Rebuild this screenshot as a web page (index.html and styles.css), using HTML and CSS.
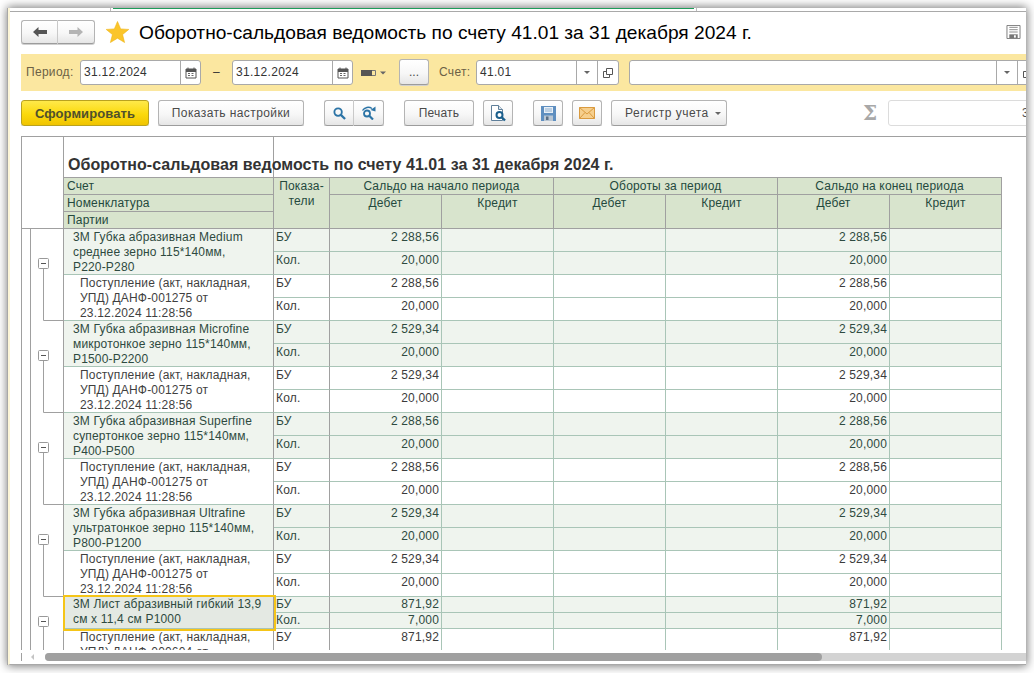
FILE: index.html
```html
<!DOCTYPE html>
<html lang="ru">
<head>
<meta charset="utf-8">
<title>Оборотно-сальдовая ведомость</title>
<link rel="stylesheet" href="styles.css">
</head>
<body>
<div class="window">
  <div class="tabstrip"><div class="tabline"></div></div>
  <div class="content">
    <div class="navrow">
      <div class="btn-group nav-group">
        <button class="btn nav-btn"><svg width="14" height="10" viewBox="0 0 14 10"><path d="M0 5 5.500 0V3H14V7H5.500V10Z" fill="#555"/></svg></button>
        <button class="btn nav-btn"><svg width="14" height="10" viewBox="0 0 14 10"><path d="M14 5 8.500 0V3H0V7H8.500V10Z" fill="#b4b4b4"/></svg></button>
      </div>
      <svg class="star" width="23" height="22" viewBox="0 0 24 24" preserveAspectRatio="none"><path d="M12 0.500 15.300 8.600 23.800 9.200 17.300 14.800 19.400 23.500 12 18.800 4.600 23.500 6.700 14.800 0.200 9.200 8.700 8.600Z" fill="#fbc52a" stroke="#eeb211" stroke-width=".6"/></svg>
      <h1 class="page-title">Оборотно-сальдовая ведомость по счету 41.01 за 31 декабря 2024 г.</h1>
      <svg class="floppy-top" width="15" height="14" viewBox="0 0 15 15"><path d="M.5.5H14.500V14.500H.5Z" fill="#fff" stroke="#777"/><path d="M3 2.500H12M3 5H12M3 7.500H12" stroke="#888"/><path d="M3 10H12V14H3Z" fill="#777"/><path d="M8 11H10V13.500H8Z" fill="#fff"/></svg>
    </div>

    <div class="filterbar">
      <span class="flabel period-label">Период:</span>
      <div class="field date-field"><span class="field-value">31.12.2024</span><span class="field-btn cal-btn"><svg width="12" height="12" viewBox="0 0 12 12"><path d="M1 2H11V11H1Z" fill="#fff" stroke="#555"/><path d="M1 2H11V5H1Z" fill="#555"/><path d="M3 0.500V3M9 0.500V3" stroke="#555"/><path d="M3 6.500H5M6.500 6.500H8.500M3 8.500H5M6.500 8.500H8.500" stroke="#666"/></svg></span></div>
      <span class="dash">–</span>
      <div class="field date-field date-two"><span class="field-value">31.12.2024</span><span class="field-btn cal-btn"><svg width="12" height="12" viewBox="0 0 12 12"><path d="M1 2H11V11H1Z" fill="#fff" stroke="#555"/><path d="M1 2H11V5H1Z" fill="#555"/><path d="M3 0.500V3M9 0.500V3" stroke="#555"/><path d="M3 6.500H5M6.500 6.500H8.500M3 8.500H5M6.500 8.500H8.500" stroke="#666"/></svg></span></div>
      <svg class="period-icon" width="25" height="6" viewBox="0 0 25 6"><path d="M0 0H11V6H0Z" fill="#555"/><path d="M11 .500H14.500V5.500H11" fill="none" stroke="#777"/><path d="M19 1.500H25L22 4.500Z" fill="#666"/></svg>
      <button class="btn dots-btn">...</button>
      <span class="flabel acc-label">Счет:</span>
      <div class="field acc-field"><span class="field-value">41.01</span><span class="field-btn drop-btn"><span class="tri"></span></span><span class="field-btn open-btn"><svg width="10" height="10" viewBox="0 0 10 10"><path d="M3.500.500H9.500V6.500H3.500Z" fill="none" stroke="#555"/><path d="M3 3.500H.500V9.500H6.500V7" fill="none" stroke="#555"/></svg></span></div>
      <div class="field sub-field"><span class="field-value"></span><span class="field-btn drop-btn"><span class="tri"></span></span><span class="field-btn open-btn"><svg width="10" height="10" viewBox="0 0 10 10"><path d="M3.500.500H9.500V6.500H3.500Z" fill="none" stroke="#555"/><path d="M3 3.500H.500V9.500H6.500V7" fill="none" stroke="#555"/></svg></span></div>
    </div>

    <div class="cmdbar">
      <button class="btn primary-btn">Сформировать</button>
      <button class="btn settings-btn">Показать настройки</button>
      <div class="btn-group search-group">
        <button class="btn icon-btn"><svg width="13" height="13" viewBox="0 0 14 14"><circle cx="5.500" cy="5.500" r="4" fill="none" stroke="#2c74a6" stroke-width="2"/><path d="M8.500 8.500 13 13" stroke="#2c74a6" stroke-width="2.400"/></svg></button>
        <button class="btn icon-btn"><svg width="16" height="14" viewBox="0 0 16 14"><circle cx="6" cy="7.500" r="3" fill="none" stroke="#2c74a6" stroke-width="1.800"/><path d="M8.500 10 12 13.500" stroke="#2c74a6" stroke-width="2.200"/><path d="M1.500 4.500C3.500 1 8 .5 11 2.500" fill="none" stroke="#2c74a6" stroke-width="1.400"/><path d="M14.500 .5V5.500L9.500 4Z" fill="#2c74a6"/></svg></button>
      </div>
      <button class="btn print-btn">Печать</button>
      <button class="btn square-btn preview-btn"><svg width="16" height="17" viewBox="0 0 16 17"><path d="M1.500.500H8.500L12.500 4.500V15.500H1.500Z" fill="#fff" stroke="#5f7f9a"/><path d="M8.500.5V4.500H12.500" fill="#dfe7ee" stroke="#5f7f9a"/><circle cx="9.500" cy="10" r="3" fill="#fff" stroke="#1b5f8c" stroke-width="2"/><path d="M11.500 12 15 15.500" stroke="#1b5f8c" stroke-width="2.400"/></svg></button>
      <button class="btn square-btn save-btn"><svg width="15" height="15" viewBox="0 0 15 15"><path d="M0 0H15V15H0Z" fill="#5f8fc0"/><path d="M3 1H12V7H3Z" fill="#e9f0f7"/><path d="M4 3H11M4 5H11" stroke="#8fb0cf"/><path d="M3 9.500H12V15H3Z" fill="#b9c6d3"/><path d="M5 10.500H7.500V14H5Z" fill="#5a6f85"/></svg></button>
      <button class="btn square-btn mail-btn"><svg width="16" height="12" viewBox="0 0 16 12"><path d="M.500.500H15.500V11.500H.500Z" fill="#f6cf8d" stroke="#d99a3f"/><path d="M.500.500 8 7 15.500.500M.500 11.500 6 5.500M15.500 11.500 10 5.500" fill="none" stroke="#d99a3f"/></svg></button>
      <button class="btn register-btn">Регистр учета<span class="tri tri-btn"></span></button>
      <span class="sigma">Σ</span>
      <div class="total-field">3</div>
    </div>

    <div class="report">
      <table class="sheet">
        <colgroup><col class="c-tree"><col class="c-name"><col class="c-ind"><col class="c-num"><col class="c-num"><col class="c-num"><col class="c-num"><col class="c-num"><col class="c-num"></colgroup>
        <thead>
          <tr class="r-title"><th class="corner" rowspan="4"></th><th class="title-cell"><span class="report-title">Оборотно-сальдовая ведомость по счету 41.01 за 31 декабря 2024 г.</span></th><th class="title-rest" colspan="7"></th></tr>
          <tr class="r-head"><th class="hl">Счет</th><th class="hi" rowspan="3">Показа-<br>тели</th><th colspan="2">Сальдо на начало периода</th><th colspan="2">Обороты за период</th><th colspan="2">Сальдо на конец периода</th></tr>
          <tr class="r-head"><th class="hl">Номенклатура</th><th rowspan="2">Дебет</th><th rowspan="2">Кредит</th><th rowspan="2">Дебет</th><th rowspan="2">Кредит</th><th rowspan="2">Дебет</th><th rowspan="2">Кредит</th></tr>
          <tr class="r-head"><th class="hl">Партии</th></tr>
        </thead>
        <tbody>
          <tr class="tint"><td class="tree" rowspan="4"><svg class="tree-svg" width="41" height="92" viewBox="0 0 41 92"><path d="M8.500 0V92M21.500 40V91.500H41" fill="none" stroke="#a0a0a0"/><rect x="16.500" y="29.500" width="10" height="10" rx="1" fill="#fff" stroke="#999"/><path d="M19 34.500H24" stroke="#555"/></svg></td><td class="name" rowspan="2"><div class="cell-text">3M Губка абразивная Medium среднее зерно 115*140мм, <span class="nb">P220-P280</span></div></td><td class="ind">БУ</td><td class="num">2 288,56</td><td></td><td></td><td></td><td class="num">2 288,56</td><td></td></tr>
          <tr class="tint"><td class="ind">Кол.</td><td class="num">20,000</td><td></td><td></td><td></td><td class="num">20,000</td><td></td></tr>
          <tr><td class="name sub" rowspan="2"><div class="cell-text">Поступление (акт, накладная, УПД) ДАНФ-001275 от 23.12.2024 11:28:56</div></td><td class="ind">БУ</td><td class="num">2 288,56</td><td></td><td></td><td></td><td class="num">2 288,56</td><td></td></tr>
          <tr><td class="ind">Кол.</td><td class="num">20,000</td><td></td><td></td><td></td><td class="num">20,000</td><td></td></tr>

          <tr class="tint"><td class="tree" rowspan="4"><svg class="tree-svg" width="41" height="92" viewBox="0 0 41 92"><path d="M8.500 0V92M21.500 40V91.500H41" fill="none" stroke="#a0a0a0"/><rect x="16.500" y="29.500" width="10" height="10" rx="1" fill="#fff" stroke="#999"/><path d="M19 34.500H24" stroke="#555"/></svg></td><td class="name" rowspan="2"><div class="cell-text">3M Губка абразивная Microfine микротонкое зерно 115*140мм, P1500-P2200</div></td><td class="ind">БУ</td><td class="num">2 529,34</td><td></td><td></td><td></td><td class="num">2 529,34</td><td></td></tr>
          <tr class="tint"><td class="ind">Кол.</td><td class="num">20,000</td><td></td><td></td><td></td><td class="num">20,000</td><td></td></tr>
          <tr><td class="name sub" rowspan="2"><div class="cell-text">Поступление (акт, накладная, УПД) ДАНФ-001275 от 23.12.2024 11:28:56</div></td><td class="ind">БУ</td><td class="num">2 529,34</td><td></td><td></td><td></td><td class="num">2 529,34</td><td></td></tr>
          <tr><td class="ind">Кол.</td><td class="num">20,000</td><td></td><td></td><td></td><td class="num">20,000</td><td></td></tr>

          <tr class="tint"><td class="tree" rowspan="4"><svg class="tree-svg" width="41" height="92" viewBox="0 0 41 92"><path d="M8.500 0V92M21.500 40V91.500H41" fill="none" stroke="#a0a0a0"/><rect x="16.500" y="29.500" width="10" height="10" rx="1" fill="#fff" stroke="#999"/><path d="M19 34.500H24" stroke="#555"/></svg></td><td class="name" rowspan="2"><div class="cell-text">3M Губка абразивная Superfine супертонкое зерно 115*140мм, P400-P500</div></td><td class="ind">БУ</td><td class="num">2 288,56</td><td></td><td></td><td></td><td class="num">2 288,56</td><td></td></tr>
          <tr class="tint"><td class="ind">Кол.</td><td class="num">20,000</td><td></td><td></td><td></td><td class="num">20,000</td><td></td></tr>
          <tr><td class="name sub" rowspan="2"><div class="cell-text">Поступление (акт, накладная, УПД) ДАНФ-001275 от 23.12.2024 11:28:56</div></td><td class="ind">БУ</td><td class="num">2 288,56</td><td></td><td></td><td></td><td class="num">2 288,56</td><td></td></tr>
          <tr><td class="ind">Кол.</td><td class="num">20,000</td><td></td><td></td><td></td><td class="num">20,000</td><td></td></tr>

          <tr class="tint"><td class="tree" rowspan="4"><svg class="tree-svg" width="41" height="92" viewBox="0 0 41 92"><path d="M8.500 0V92M21.500 40V91.500H41" fill="none" stroke="#a0a0a0"/><rect x="16.500" y="29.500" width="10" height="10" rx="1" fill="#fff" stroke="#999"/><path d="M19 34.500H24" stroke="#555"/></svg></td><td class="name" rowspan="2"><div class="cell-text">3M Губка абразивная Ultrafine ультратонкое зерно 115*140мм, P800-P1200</div></td><td class="ind">БУ</td><td class="num">2 529,34</td><td></td><td></td><td></td><td class="num">2 529,34</td><td></td></tr>
          <tr class="tint"><td class="ind">Кол.</td><td class="num">20,000</td><td></td><td></td><td></td><td class="num">20,000</td><td></td></tr>
          <tr><td class="name sub" rowspan="2"><div class="cell-text">Поступление (акт, накладная, УПД) ДАНФ-001275 от 23.12.2024 11:28:56</div></td><td class="ind">БУ</td><td class="num">2 529,34</td><td></td><td></td><td></td><td class="num">2 529,34</td><td></td></tr>
          <tr><td class="ind">Кол.</td><td class="num">20,000</td><td></td><td></td><td></td><td class="num">20,000</td><td></td></tr>

          <tr class="tint short"><td class="tree" rowspan="4"><svg class="tree-svg" width="41" height="78" viewBox="0 0 41 78"><path d="M8.500 0V78M21.500 30V78" fill="none" stroke="#a0a0a0"/><rect x="16.500" y="19.500" width="10" height="10" rx="1" fill="#fff" stroke="#999"/><path d="M19 24.500H24" stroke="#555"/></svg></td><td class="name selected" rowspan="2">3M Лист абразивный гибкий 13,9 см х 11,4 см P1000</td><td class="ind">БУ</td><td class="num">871,92</td><td></td><td></td><td></td><td class="num">871,92</td><td></td></tr>
          <tr class="tint short"><td class="ind">Кол.</td><td class="num">7,000</td><td></td><td></td><td></td><td class="num">7,000</td><td></td></tr>
          <tr><td class="name sub" rowspan="2"><div class="cell-text">Поступление (акт, накладная, УПД) ДАНФ-000604 от 23.12.2024 11:28:56</div></td><td class="ind">БУ</td><td class="num">871,92</td><td></td><td></td><td></td><td class="num">871,92</td><td></td></tr>
          <tr><td class="ind">Кол.</td><td class="num">7,000</td><td></td><td></td><td></td><td class="num">7,000</td><td></td></tr>
        </tbody>
      </table>
    </div>
    <div class="scrollbar"><span class="scroll-arrow"></span><div class="scroll-track"><div class="scroll-thumb"></div></div></div>
  </div>
</div>
</body>
</html>
```

FILE: styles.css
```css
* { box-sizing: border-box; }
html, body { margin: 0; padding: 0; background: #fff; overflow: hidden; }
body { width: 1034px; height: 673px; padding: 8px; font: 12px/15px "Liberation Sans", Arial, sans-serif; color: #333; }
button { font: inherit; margin: 0; padding: 0; }

.window { width: 1018px; height: 657px; background: #fff; border-left: 2px solid #fdf6d8; border-bottom: 1px solid #a8a8a8; box-shadow: -1px 0 0 #a8a8a8, 0 0 9px 1px #777; display: flex; flex-direction: column; overflow: hidden; }
.tabstrip { height: 4px; flex: none; border-bottom: 1px solid #a9a9a9; background: #fff; }
.tabline { width: 587px; height: 3px; margin-left: 100px; border-left: 1px solid #bbb; border-right: 1px solid #bbb; background: linear-gradient(#1f9c5a, #1f9c5a) 2px 0 / 581px 1px no-repeat; }
.content { flex: 1; min-height: 0; padding-left: 11px; display: flex; flex-direction: column; overflow: hidden; }

.navrow { height: 24px; margin-top: 8px; display: flex; align-items: center; flex: none; }
.btn { display: inline-flex; align-items: center; justify-content: center; border: 1px solid #b4b4b4; border-bottom-color: #9c9c9c; border-radius: 3px; background: linear-gradient(#ffffff, #f7f7f7 55%, #e6e6e6); color: #4a4a4a; box-shadow: 0 1px 0 #d0d0d0; flex: none; }
.btn-group { display: flex; flex: none; }
.btn-group .btn:first-child { border-radius: 3px 0 0 3px; border-right: 1px solid #c9c9c9; }
.btn-group .btn:last-child { border-radius: 0 3px 3px 0; border-left: 0; }
.nav-group { height: 24px; }
.nav-btn { width: 37px; height: 24px; }
.star { margin-left: 11px; flex: none; }
.page-title { margin: 0 0 0 10px; padding-top: 1px; font: 400 19.150px/23px "Liberation Sans", Arial, sans-serif; color: #000; white-space: nowrap; }
.floppy-top { margin-left: auto; margin-right: 5px; flex: none; }

.filterbar { height: 37px; margin-top: 10px; flex: none; background: #fbe7a0; display: flex; align-items: center; padding-left: 5px; overflow: hidden; }
.flabel { color: #6c6145; white-space: nowrap; font-size: 12px; letter-spacing: .3px; flex: none; }
.period-label { width: 49px; }
.field { height: 25px; background: #fff; border: 1px solid #a9a9a9; border-radius: 3px; display: flex; flex: none; align-items: stretch; }
.field-value { flex: 1; min-width: 0; padding: 4px 0 0 3px; color: #333; letter-spacing: .3px; }
.field-btn { display: flex; align-items: center; justify-content: center; border-left: 1px solid #a9a9a9; flex: none; }
.date-field { width: 121px; margin-left: 5px; }
.date-two { margin-left: 12px; }
.cal-btn { width: 20px; }
.dash { width: 7px; margin-left: 12px; color: #333; flex: none; }
.period-icon { margin-left: 8px; flex: none; }
.dots-btn { width: 30px; height: 26px; margin-left: 13px; margin-top: -1px; font-size: 12px; }
.acc-label { width: 33px; margin-left: 10px; }
.acc-field { width: 143px; margin-left: 4px; }
.sub-field { width: 420px; margin-left: 10px; }
.drop-btn { width: 21px; }
.open-btn { width: 21px; }
.sub-field .open-btn { width: 31px; justify-content: flex-start; padding-left: 5px; }
.tri { display: inline-block; width: 0; height: 0; border-left: 3px solid transparent; border-right: 3px solid transparent; border-top: 3px solid #666; }

.cmdbar { height: 26px; margin-top: 9px; flex: none; display: flex; align-items: stretch; overflow: hidden; }
.primary-btn { width: 128px; border-color: #b9a21f; background: linear-gradient(#ffe94a, #fbd90c 55%, #f0c400); font-weight: 700; font-size: 13px; letter-spacing: .1px; color: #50502c; }
.settings-btn { width: 146px; margin-left: 9px; letter-spacing: .4px; }
.search-group { margin-left: 20px; }
.icon-btn { width: 30px; height: 26px; }
.print-btn { width: 70px; margin-left: 20px; letter-spacing: .2px; }
.square-btn { width: 30px; }
.preview-btn { margin-left: 9px; }
.save-btn { margin-left: 20px; }
.mail-btn { margin-left: 9px; }
.register-btn { width: 116px; margin-left: 9px; letter-spacing: .5px; justify-content: flex-start; padding-left: 13px; }
.tri-btn { margin-left: 6px; }
.sigma { margin-left: 136px; width: 14px; font: 700 20px/26px "DejaVu Serif", "Liberation Serif", serif; color: #a8a8a8; text-align: center; flex: none; }
.total-field { width: 200px; margin-left: 11px; flex: none; border: 1px solid #dcdcdc; border-radius: 3px; padding: 5px 0 0 133px; color: #555; }

.report { height: 514px; margin-top: 10px; flex: none; overflow: hidden; border-left: 1px solid #a0a0a0; border-top: 1px solid #a0a0a0; }
.sheet { width: 980px; table-layout: fixed; border-collapse: separate; border-spacing: 0; color: #3b3b3b; letter-spacing: .17px; }
.c-tree { width: 42px; }
.c-name { width: 210px; }
.c-ind { width: 56px; }
.c-num { width: 112px; }
.sheet th, .sheet td { padding: 0; font-weight: 400; vertical-align: top; }
.corner { border-right: 1px solid #a0a0a0; border-bottom: 1px solid #a0a0a0; background: #fff; }
.r-title th { height: 41px; border-bottom: 1px solid #a0a0a0; }
.sheet th.title-cell { border-right: 1px solid #a0a0a0; text-align: left; vertical-align: bottom; padding: 0 0 2px 4px; }
.report-title { display: block; white-space: nowrap; font: 700 16px/20px "Liberation Sans", Arial, sans-serif; letter-spacing: .04px; color: #333; }
.sheet .r-head th { height: 17px; padding-top: 1px; background: #d8e4cd; color: #24493d; border-right: 1px solid #a0a0a0; border-bottom: 1px solid #a0a0a0; text-align: center; line-height: 15px; white-space: nowrap; }
.sheet .r-head th.hl { text-align: left; padding-left: 3px; }
.sheet tbody td { height: 23px; border-right: 1px solid #a9c5b7; border-bottom: 1px solid #a9c5b7; }
.sheet tbody tr.short td { height: 16px; }
.tint td { background: #eff4ee; color: #2e4a40; }
.sheet tbody td.tree { background: #fff; border-right: 1px solid #a0a0a0; border-bottom: 0; height: auto; }
.tree-svg { display: block; }
.sheet td.name { padding-left: 9px; padding-right: 8px; }
.sheet td.name.sub { padding-left: 16px; color: #3f3f3f; }
.cell-text { margin-top: 1px; margin-bottom: -1px; }
.nb { white-space: nowrap; }
.sheet tbody td.name, .sheet tbody td.ind { border-right-color: #a0a0a0; }
.sheet td.ind { padding-left: 2px; padding-top: 1px; }
.sheet td.num { text-align: right; padding-right: 2px; padding-top: 1px; }
.sheet tr.short td.ind, .sheet tr.short td.num { padding-top: 0; }
.sheet tbody .tint td.selected { position: relative; background: #e4e9e3; }
.selected::after { content: ""; position: absolute; left: -1px; top: -2px; right: -3px; bottom: -3px; border: 2px solid #f5c518; pointer-events: none; }

.scrollbar { height: 8px; margin-top: 3px; flex: none; display: flex; border-left: 1px solid #a0a0a0; }
.scroll-arrow { width: 23px; flex: none; }
.scroll-arrow::before { content: ""; display: block; width: 0; height: 0; margin: 1px 0 0 9px; border-top: 3px solid transparent; border-bottom: 3px solid transparent; border-right: 3px solid #c4c4c4; }
.scroll-track { flex: 1; background: #d3d3d3; border-radius: 4px 0 0 4px; }
.scroll-thumb { width: 777px; height: 8px; background: #a0a0a0; border-radius: 4px; }
```
